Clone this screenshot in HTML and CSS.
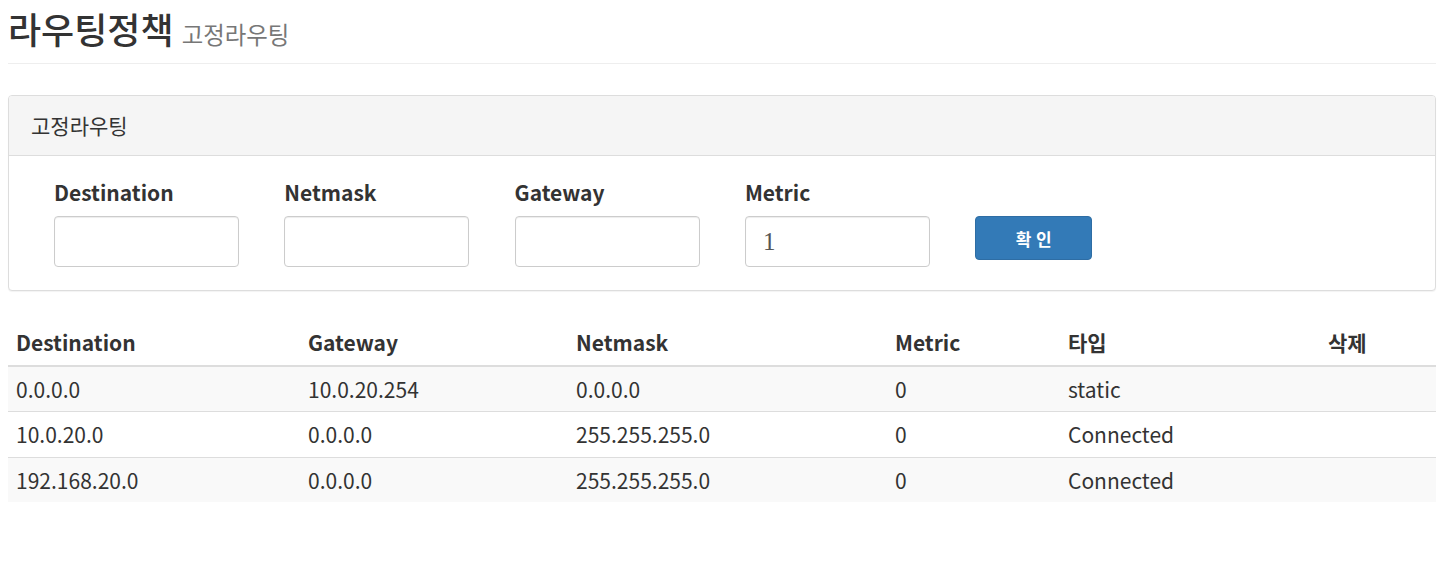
FILE: index.html
```html
<!DOCTYPE html>
<html lang="ko">
<head>
<meta charset="utf-8">
<title>라우팅정책</title>
<link rel="stylesheet" href="styles.css">
</head>
<body>
<div class="page">
  <div class="page-header">
    <h1 class="title">라우팅정책 <small class="subtitle">고정라우팅</small></h1>
  </div>

  <div class="panel">
    <div class="panel-heading">고정라우팅</div>
    <div class="panel-body">
      <form class="route-form">
        <label class="field-label">Destination</label>
        <label class="field-label">Netmask</label>
        <label class="field-label">Gateway</label>
        <label class="field-label">Metric</label>
        <span class="field-label"></span>
        <input class="field-input" type="text" value="">
        <input class="field-input" type="text" value="">
        <input class="field-input" type="text" value="">
        <input class="field-input" type="text" value="1">
        <button class="btn-primary" type="button">확 인</button>
      </form>
    </div>
  </div>

  <table class="route-table">
    <colgroup>
      <col class="col-dest">
      <col class="col-gw">
      <col class="col-mask">
      <col class="col-metric">
      <col class="col-type">
      <col class="col-del">
    </colgroup>
    <thead>
      <tr><th>Destination</th><th>Gateway</th><th>Netmask</th><th>Metric</th><th>타입</th><th>삭제</th></tr>
    </thead>
    <tbody>
      <tr><td>0.0.0.0</td><td>10.0.20.254</td><td>0.0.0.0</td><td>0</td><td>static</td><td></td></tr>
      <tr><td>10.0.20.0</td><td>0.0.0.0</td><td>255.255.255.0</td><td>0</td><td>Connected</td><td></td></tr>
      <tr><td>192.168.20.0</td><td>0.0.0.0</td><td>255.255.255.0</td><td>0</td><td>Connected</td><td></td></tr>
    </tbody>
  </table>
</div>
</body>
</html>
```

FILE: styles.css
```css
* { box-sizing: border-box; }

html, body {
  margin: 0;
  padding: 0;
  background: #fff;
}

body {
  font-family: "Noto Sans CJK KR", "Noto Sans", sans-serif;
  font-size: 21px;
  color: #333;
}

.page {
  padding: 0 7px 0 8px;
}

.page-header {
  padding: 8px 0 15px;
  border-bottom: 1px solid #eee;
}

.title {
  margin: 0;
  font-size: 36px;
  font-weight: 500;
  line-height: 40px;
  color: #333;
}

.subtitle {
  margin-left: -2px;
  font-size: 23.4px;
  font-weight: 400;
  line-height: 1;
  color: #777;
}

.panel {
  margin-top: 31px;
  border: 1px solid #ddd;
  border-radius: 4px;
  background: #fff;
  box-shadow: 0 1px 1px rgba(0,0,0,.05);
}

.panel-heading {
  height: 60px;
  padding: 0 22px;
  line-height: 59px;
  font-size: 21px;
  background: #f5f5f5;
  border-bottom: 1px solid #ddd;
  border-radius: 3px 3px 0 0;
}

.panel-body {
  padding: 22px 45px 23px;
}

.route-form {
  display: grid;
  grid-template-columns: repeat(4, 185px) 117px;
  column-gap: 45.3px;
  row-gap: 10px;
  align-items: start;
  margin: 0;
}

.field-label {
  display: block;
  font-weight: 700;
  line-height: 28px;
  height: 28px;
}

.field-input {
  display: block;
  width: 185px;
  height: 51px;
  padding: 0 17px;
  border: 1px solid #ccc;
  border-radius: 4px;
  font-family: "Liberation Serif", serif;
  font-size: 25px;
  color: #555;
  background: #fff;
  box-shadow: inset 0 1px 1px rgba(0,0,0,.075);
}

.btn-primary {
  display: block;
  width: 117px;
  height: 44px;
  padding: 0;
  border: 1px solid #2e6da4;
  border-radius: 4px;
  background: #337ab7;
  color: #fff;
  font-family: "Noto Sans CJK KR", sans-serif;
  font-size: 17px;
  font-weight: 700;
}

.route-table {
  width: 100%;
  margin-top: 29px;
  border-collapse: collapse;
  border-spacing: 0;
  table-layout: fixed;
}

.col-dest { width: 292px; }
.col-gw { width: 268px; }
.col-mask { width: 319px; }
.col-metric { width: 173px; }
.col-type { width: 260px; }
.col-del { width: 116px; }

.route-table th,
.route-table td {
  padding: 8px;
  line-height: 28.57px;
  text-align: left;
  vertical-align: top;
}

.route-table th {
  font-weight: 700;
  border-bottom: 2px solid #ddd;
}

.route-table td {
  font-weight: 400;
  border-top: 1px solid #ddd;
}

.route-table tbody tr:first-child td {
  border-top: 0;
}

.route-table tbody tr:nth-child(odd) {
  background: #f9f9f9;
}
```
